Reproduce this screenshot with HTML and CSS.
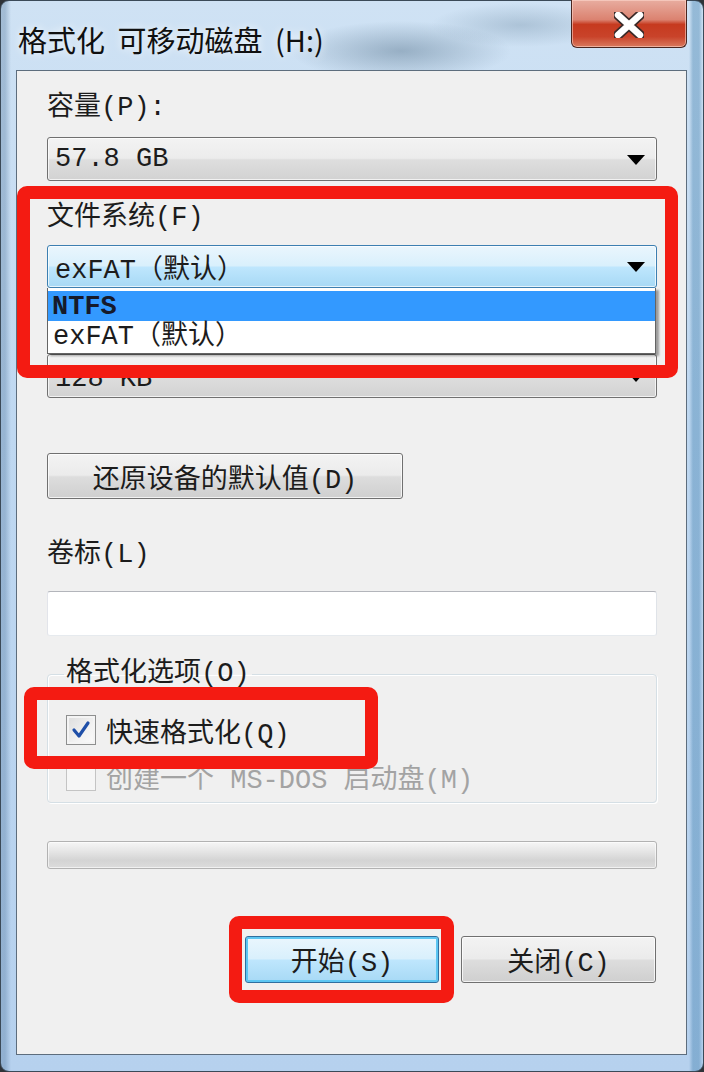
FILE: index.html
```html
<!DOCTYPE html>
<html lang="zh-CN">
<head>
    <meta charset="UTF-8">
    <meta name="viewport" content="width=device-width, initial-scale=1.0">
    <title>格式化 可移动磁盘 (H:)</title>
    <link rel="stylesheet" href="styles.css">
</head>
<body>
    <div class="window">
        <!-- Title bar -->
        <div class="titlebar">
            <span class="title">格式化 可移动磁盘 (H:)</span>
            <button class="close-x" aria-label="关闭">
                <svg width="30" height="26" viewBox="0 0 30 26">
                    <path d="M4 3 L26 23 M26 3 L4 23" stroke="#3a2a28" stroke-width="10" stroke-linecap="round"/>
                    <path d="M4 3 L26 23 M26 3 L4 23" stroke="#ffffff" stroke-width="6.5" stroke-linecap="round"/>
                </svg>
            </button>
        </div>

        <!-- Dialog body -->
        <div class="client">
            <div class="label label-cap">容量(P):</div>
            <div class="combo">
                <span>57.8 GB</span>
                <svg class="arrow" width="18" height="10" viewBox="0 0 18 10"><path d="M0 0 H18 L9 10 Z"/></svg>
            </div>

            <div class="label label-fs">文件系统(F)</div>
            <div class="combo combo-open">
                <span>exFAT（默认）</span>
                <svg class="arrow" width="18" height="10" viewBox="0 0 18 10"><path d="M0 0 H18 L9 10 Z"/></svg>
                <ul class="dropdown">
                    <li class="selected">NTFS</li>
                    <li>exFAT（默认）</li>
                </ul>
            </div>

            <!-- allocation unit size: its label lies under the open list -->
            <div class="combo combo-au">
                <span>128 KB</span>
                <svg class="arrow" width="18" height="10" viewBox="0 0 18 10"><path d="M0 0 H18 L9 10 Z"/></svg>
            </div>

            <button class="btn btn-restore">还原设备的默认值(D)</button>

            <div class="label label-vol">卷标(L)</div>
            <input class="textbox" type="text">

            <fieldset class="options">
                <legend>格式化选项(O)</legend>
                <label class="check">
                    <span class="box">
                        <svg width="22" height="22" viewBox="0 0 22 22"><path d="M4 11 L9 17 L18 4" fill="none" stroke="#1f4fa8" stroke-width="3.2" stroke-linecap="round" stroke-linejoin="round"/></svg>
                    </span>
                    <span>快速格式化(Q)</span>
                </label>
                <label class="check disabled">
                    <span class="box"></span>
                    <span>创建一个 MS-DOS 启动盘(M)</span>
                </label>
            </fieldset>

            <div class="progress"></div>

            <div class="actions">
                <button class="btn btn-default">开始(S)</button>
                <button class="btn btn-close">关闭(C)</button>
            </div>
        </div>

        <!-- Red highlight marks -->
        <div class="mark mark-fs"></div>
        <div class="mark mark-quick"></div>
        <div class="mark mark-start"></div>
    </div>
</body>
</html>
```

FILE: styles.css
```css
/* General */
* {
    margin: 0;
    padding: 0;
    box-sizing: border-box;
}
body {
    width: 704px;
    height: 1072px;
    background-color: #2f3338;
    font-family: "Liberation Mono", "Noto Sans CJK SC", monospace;
    font-size: 27px;
    color: #1c1c1c;
    overflow: hidden;
}

/* Window frame */
.window {
    position: relative;
    width: 704px;
    height: 1072px;
    display: flex;
    flex-direction: column;
    border: 1px solid #3b4a58;
    border-radius: 9px;
    background:
        radial-gradient(ellipse 110px 30px at 400px 50px, rgba(70, 100, 125, 0.4), transparent),
        radial-gradient(ellipse 90px 22px at 520px 24px, rgba(95, 125, 150, 0.3), transparent),
        linear-gradient(90deg, rgba(60, 100, 140, 0.3) 0 4px, transparent 10px calc(100% - 14px), rgba(40, 110, 160, 0.35) calc(100% - 10px) calc(100% - 4px), transparent),
        linear-gradient(180deg, #cfe2f4 0%, #bfd8f1 40%, #b6d1ee 100%);
}

/* Title bar */
.titlebar {
    height: 69px;
    display: flex;
    justify-content: space-between;
    align-items: flex-start;
}
.title {
    margin: 20px 0 0 17px;
    font-family: "Noto Sans CJK SC", sans-serif;
    font-size: 29px;
    line-height: 36px;
    word-spacing: 6px;
    color: #101010;
    white-space: nowrap;
    text-shadow: 0 0 8px rgba(255, 255, 255, 0.9);
}
.close-x {
    width: 116px;
    height: 48px;
    margin: -1px 16px 0 0;
    display: flex;
    align-items: center;
    justify-content: center;
    padding-top: 2px;
    border: 1px solid #4a2620;
    border-top: none;
    border-radius: 0 0 6px 6px;
    background: linear-gradient(180deg, #e8ada0 0%, #db8270 42%, #c63a1f 52%, #c9432a 78%, #d97a5e 100%);
    box-shadow: inset 0 0 0 1px rgba(255, 220, 210, 0.55);
}

/* Client area */
.client {
    flex: 1;
    margin: 0 16px 16px 15px;
    padding: 19px 29px 0 30px;
    display: flex;
    flex-direction: column;
    align-items: flex-start;
    background-color: #f0f0f0;
    border: 1px solid #5d6d7d;
}

.label {
    line-height: 36px;
    white-space: nowrap;
}
.label-fs {
    margin-top: 19px;
}
.label-vol {
    margin-top: 38px;
}

/* Combo boxes */
.combo {
    position: relative;
    width: 100%;
    height: 44px;
    margin-top: 11px;
    padding: 0 11px 0 7px;
    display: flex;
    align-items: center;
    justify-content: space-between;
    border: 1px solid #707070;
    border-radius: 3px;
    background: linear-gradient(180deg, #f3f3f3 0%, #ececec 48%, #dedede 52%, #d2d2d2 100%);
    box-shadow: inset 0 0 0 1px rgba(255, 255, 255, 0.7);
    white-space: nowrap;
}
.combo-open {
    height: 43px;
    margin-top: 9px;
    border-color: #3c7fb1;
    background: linear-gradient(180deg, #eaf6fd 0%, #d9f0fc 48%, #bee6fd 52%, #a7d9f5 100%);
}
.combo-au {
    margin-top: 66px;
}
.combo-au span {
    margin-top: 6px;
}
.arrow {
    fill: #000;
    margin-top: 1px;
}

/* Open drop-down list */
.dropdown {
    position: absolute;
    z-index: 2;
    top: 42px;
    left: -1px;
    width: 609px;
    height: 66px;
    padding-top: 3px;
    list-style: none;
    background-color: #fff;
    border: 1px solid #646464;
    border-top: none;
    box-shadow: 3px 2px 2px rgba(0, 0, 0, 0.35);
}
.dropdown li {
    height: 31px;
    line-height: 33px;
    padding-left: 5px;
}
.dropdown li.selected {
    height: 30px;
    line-height: 33px;
    padding-left: 4px;
    background-color: #3399ff;
    font-weight: bold;
    color: #161a2a;
}

/* Buttons */
.btn {
    font: inherit;
    color: inherit;
    height: 47px;
    border: 1px solid #707070;
    border-radius: 3px;
    background: linear-gradient(180deg, #f3f3f3 0%, #ebebeb 48%, #dddddd 52%, #cfcfcf 100%);
    box-shadow: inset 0 0 0 1px rgba(255, 255, 255, 0.75);
    white-space: nowrap;
}
.btn-restore {
    width: 356px;
    height: 46px;
    margin-top: 55px;
}
.btn-default {
    width: 194px;
    border-color: #2f6f9f;
    background: linear-gradient(180deg, #eaf6fd 0%, #d9f0fc 48%, #bee6fd 52%, #a7d9f5 100%);
    box-shadow: inset 0 0 0 2px #5cc6f2;
}
.btn-close {
    width: 195px;
}

/* Volume label */
.textbox {
    width: 100%;
    height: 45px;
    margin-top: 18px;
    background-color: #fff;
    border: 1px solid;
    border-color: #b3b5bb #dfe3e8 #e6eaee #e2e4ea;
    border-radius: 3px;
}

/* Format options group */
.options {
    width: 100%;
    min-width: 0;
    margin-top: 20px;
    padding: 0 0 8px 18px;
    border: 1px solid #d5dfe5;
    border-radius: 4px;
    box-shadow: inset 1px 1px 0 #fff, 1px 1px 0 #fff;
    display: flex;
    flex-direction: column;
}
.options legend {
    margin-left: -2px;
    padding: 0 2px;
    line-height: 36px;
    white-space: nowrap;
}
.check {
    display: flex;
    align-items: center;
    gap: 10px;
    height: 36px;
    white-space: nowrap;
}
.check:first-of-type {
    margin-top: 20px;
}
.check + .check {
    margin-top: 10px;
}
.box {
    width: 30px;
    height: 30px;
    display: flex;
    align-items: center;
    justify-content: center;
    border: 1px solid #8e8f8f;
    background: linear-gradient(135deg, #dcdcdc 0%, #f2f2f2 60%, #fbfbfb 100%);
    box-shadow: inset 0 0 0 2px #f4f4f4;
}
.check.disabled {
    color: #a3a3a3;
}
.check.disabled .box {
    border-color: #c4c4c4;
    background: #f6f6f6;
    box-shadow: none;
}

/* Progress bar */
.progress {
    width: 100%;
    height: 28px;
    margin-top: 38px;
    border: 1px solid #b2b2b2;
    border-radius: 3px;
    background: linear-gradient(180deg, #f6f6f6 0%, #e6e6e6 35%, #d4d4d4 70%, #dcdcdc 100%);
    box-shadow: inset 0 0 0 1px rgba(255, 255, 255, 0.6);
}

/* Dialog buttons */
.actions {
    width: 100%;
    margin-top: 67px;
    display: flex;
    justify-content: flex-end;
    gap: 22px;
    padding-right: 1px;
}

/* Red highlight marks */
.mark {
    position: absolute;
    z-index: 3;
    border: 13px solid #f41b12;
    border-radius: 10px;
}
.mark-fs {
    left: 16px;
    top: 185px;
    width: 661px;
    height: 192px;
}
.mark-quick {
    left: 23px;
    top: 686px;
    width: 354px;
    height: 82px;
}
.mark-start {
    left: 228px;
    top: 915px;
    width: 225px;
    height: 87px;
}
```
